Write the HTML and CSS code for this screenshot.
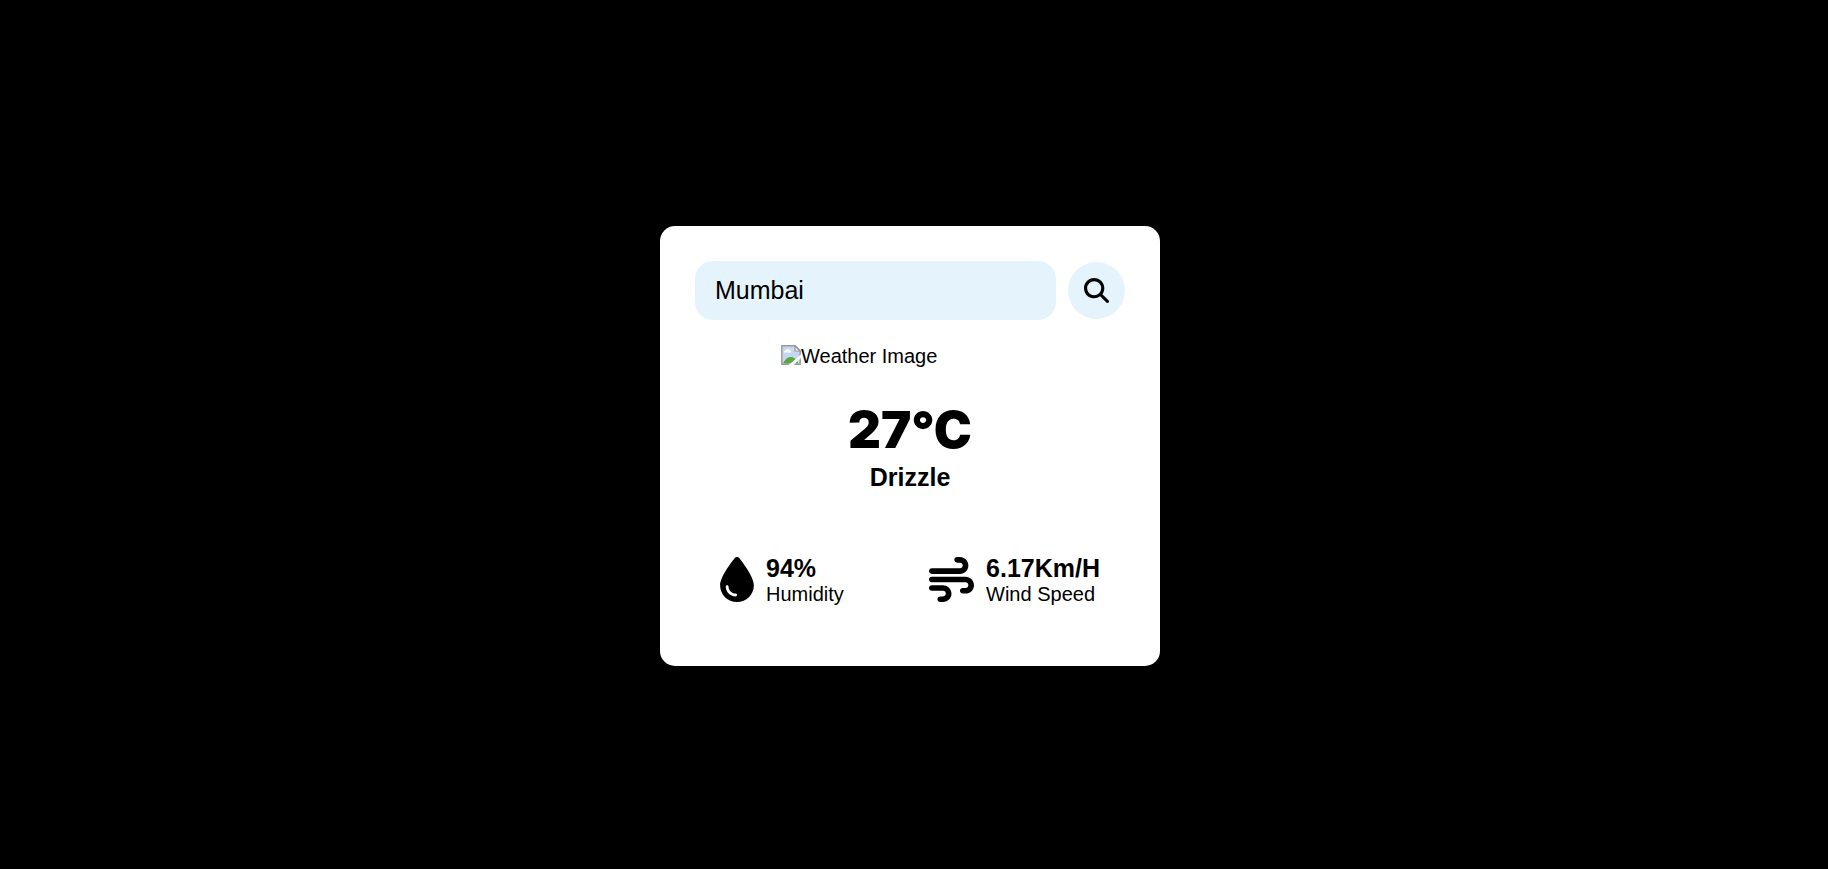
FILE: index.html
```html
<!DOCTYPE html>
<html lang="en">
<head>
<meta charset="utf-8">
<meta name="viewport" content="width=device-width, initial-scale=1">
<title>Weather</title>
<link rel="stylesheet" href="styles.css">
</head>
<body>
<main class="card">
  <form class="search">
    <input class="search-input" type="text" value="Mumbai" aria-label="City">
    <button class="search-button" type="button" aria-label="Search">
      <svg class="search-icon" viewBox="0 0 512 512" aria-hidden="true"><path d="M416 208c0 45.900-14.900 88.300-40 122.700L502.600 457.400c12.500 12.500 12.500 32.800 0 45.300s-32.800 12.500-45.300 0L330.700 376c-34.400 25.200-76.800 40-122.700 40C93.100 416 0 322.900 0 208S93.100 0 208 0S416 93.100 416 208zM208 352a144 144 0 1 0 0-288 144 144 0 1 0 0 288z"/></svg>
    </button>
  </form>
  <div class="picture">
    <svg class="picture-icon" viewBox="0 0 20 20" aria-hidden="true">
      <path fill="#c5d7f5" d="M1 1h13l5 5v13H1z"/>
      <path fill="#fff" d="M3 7.500a1.500 1.500 0 0 1 1.500-2 2.200 2.200 0 0 1 4-.5 1.700 1.700 0 0 1 1.500 2.500z"/>
      <path fill="#57a83b" d="M2 18.500c2-4 4.500-6.500 8-6.500 3 0 5.500 2 7.500 6.500z"/>
      <path fill="#fff" stroke="#9a9a9a" stroke-width="1.200" d="M14 1v5h5z"/>
      <path fill="none" stroke="#9a9a9a" stroke-width="1.400" d="M.8.800h13.400l5 5v13.400H.8z"/>
      <path fill="#fff" d="M7.500 20L20 9.500v3.500l-7.500 7z"/>
    </svg>
    <span>Weather Image</span>
  </div>
  <h1 class="temperature">27°C</h1>
  <p class="condition">Drizzle</p>
  <div class="details">
    <section class="detail">
      <svg class="droplet-icon" viewBox="0 0 384 512" aria-hidden="true"><path d="M192 512C86 512 0 426 0 320C0 228.800 130.200 57.700 166.600 11.700C172.600 4.200 181.500 0 191.100 0h1.800c9.600 0 18.500 4.200 24.500 11.700C253.800 57.700 384 228.800 384 320c0 106-86 192-192 192zM96 336c0-8.800-7.200-16-16-16s-16 7.200-16 16c0 61.900 50.100 112 112 112c8.800 0 16-7.200 16-16s-7.200-16-16-16c-44.200 0-80-35.800-80-80z"/></svg>
      <div>
        <p class="value">94%</p>
        <p class="label">Humidity</p>
      </div>
    </section>
    <section class="detail">
      <svg class="wind-icon" viewBox="0 0 512 512" aria-hidden="true"><path d="M288 32c0 17.700 14.300 32 32 32h32c17.700 0 32 14.300 32 32s-14.300 32-32 32H32c-17.700 0-32 14.300-32 32s14.300 32 32 32H352c53 0 96-43 96-96s-43-96-96-96H320c-17.700 0-32 14.300-32 32zm64 352c0 17.700 14.300 32 32 32h32c53 0 96-43 96-96s-43-96-96-96H32c-17.700 0-32 14.300-32 32s14.300 32 32 32H416c17.700 0 32 14.300 32 32s-14.300 32-32 32H384c-17.700 0-32 14.300-32 32zM128 512h32c53 0 96-43 96-96s-43-96-96-96H32c-17.700 0-32 14.300-32 32s14.300 32 32 32H160c17.700 0 32 14.300 32 32s-14.300 32-32 32H128c-17.700 0-32 14.300-32 32s14.300 32 32 32z"/></svg>
      <div>
        <p class="value">6.17Km/H</p>
        <p class="label">Wind Speed</p>
      </div>
    </section>
  </div>
</main>
</body>
</html>
```

FILE: styles.css
```css
* {
  box-sizing: border-box;
  margin: 0;
  padding: 0;
}

body {
  display: flex;
  align-items: center;
  justify-content: center;
  min-height: 100vh;
  padding: 22px 8px 0 0;
  background: #000;
  color: #000;
  font-family: "Liberation Sans", Arial, sans-serif;
  font-size: 20px;
  line-height: 23px;
}

.card {
  width: 100%;
  max-width: 500px;
  padding: 35px 35px 60px;
  border-radius: 15px;
  background: #fff;
}

.search {
  display: flex;
  align-items: center;
  gap: 12px;
}

.search-input {
  flex: 1;
  min-width: 0;
  padding: 15px 20px;
  border: 0;
  border-radius: 18px;
  background: #e5f4fc;
  color: inherit;
  font: 25px/29px "Liberation Sans", Arial, sans-serif;
}

.search-button {
  display: grid;
  place-items: center;
  width: 57px;
  height: 57px;
  border: 0;
  border-radius: 50%;
  background: #e5f4fc;
  cursor: pointer;
}

.search-icon {
  width: 25px;
  height: 25px;
}

.picture {
  display: flex;
  width: 60%;
  margin: 25px auto 32px;
}

.picture-icon {
  width: 20px;
  height: 20px;
}

.temperature {
  margin-bottom: 3px;
  font-family: "Arial Black", Inter, sans-serif;
  font-size: 51px;
  font-weight: 900;
  line-height: 60px;
  text-align: center;
}

.condition {
  font-size: 25px;
  font-weight: 700;
  line-height: 29px;
  text-align: center;
}

.details {
  display: flex;
  justify-content: space-between;
  margin-top: 62px;
  padding: 0 25px;
}

.detail {
  display: flex;
  align-items: center;
  gap: 12px;
}

.droplet-icon {
  width: 34px;
  height: 45px;
}

.wind-icon {
  width: 45px;
  height: 45px;
}

.value {
  font-size: 25px;
  font-weight: 700;
  line-height: 29px;
}
```
